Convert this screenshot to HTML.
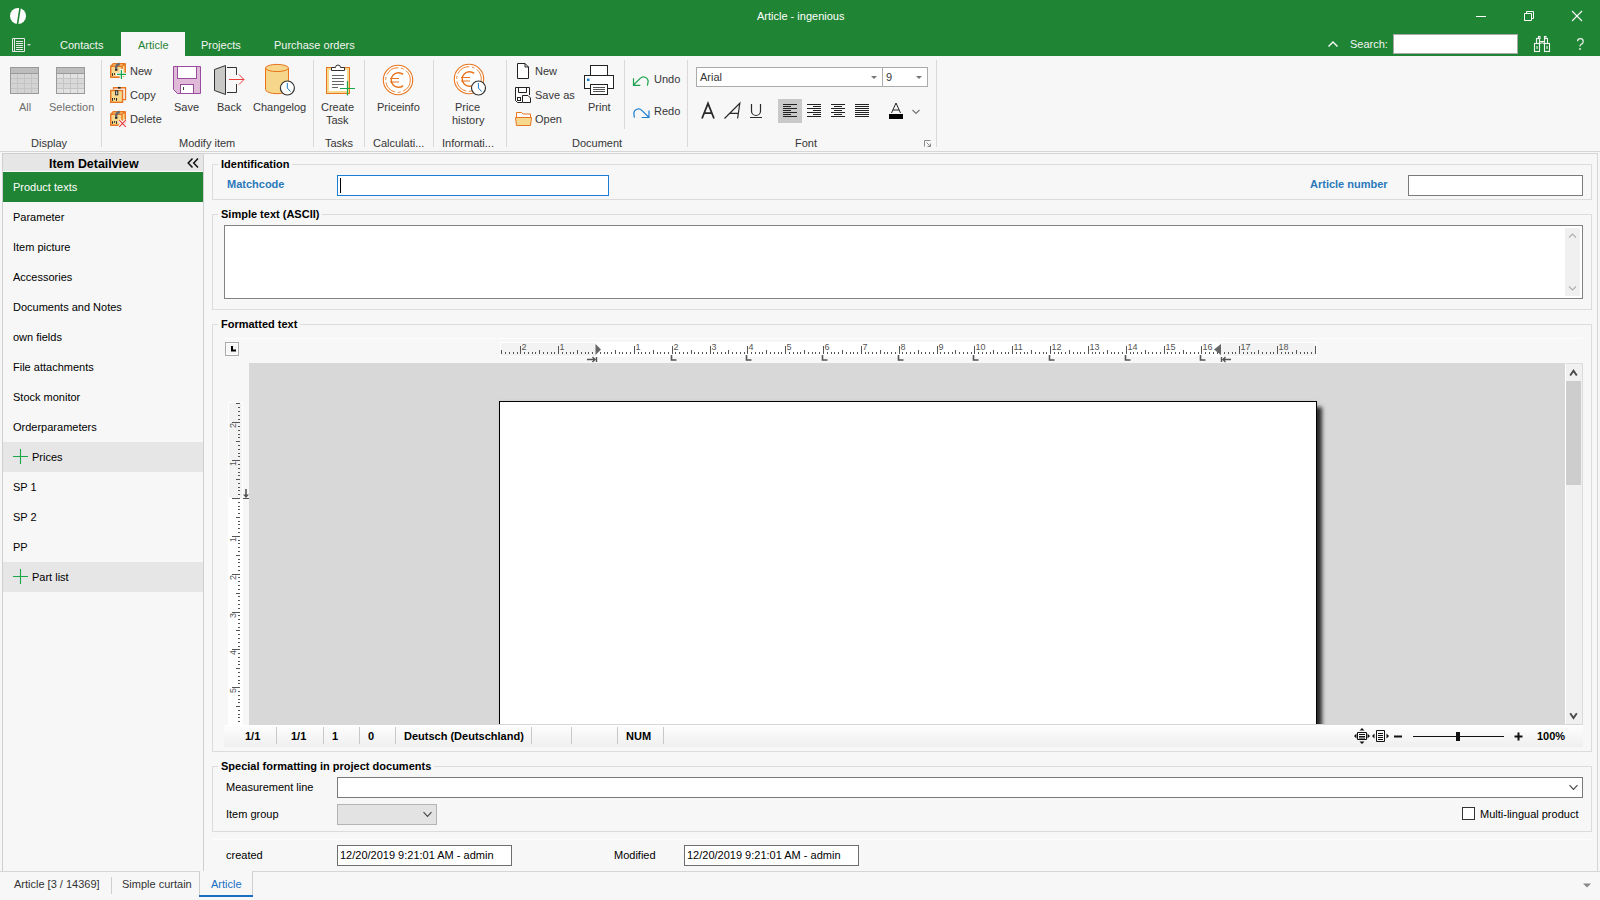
<!DOCTYPE html>
<html><head><meta charset="utf-8">
<style>
*{box-sizing:border-box}
html,body{margin:0;padding:0}
body{width:1600px;height:900px;overflow:hidden;position:relative;background:#f7f7f7;font-family:"Liberation Sans",sans-serif;font-size:11px;color:#000}
.a{position:absolute}
.t{position:absolute;white-space:nowrap;line-height:13px}
.b{font-weight:bold}
.rl{color:#363636;font-size:11px}
.gb{position:absolute;border:1px solid #dcdcdc}
.gt{position:absolute;white-space:nowrap;line-height:13px;font-weight:bold;font-size:11px;background:#f7f7f7;padding:0 3px}
.inp{position:absolute;background:#fff;border:1px solid #7a7a7a}
.sep{position:absolute;width:1px;background:#dadada}
</style></head><body>

<!-- title bar -->
<div class="a" style="left:0;top:0;width:1600px;height:56px;background:#1f8433"></div>
<svg class="a" style="left:10px;top:8px" width="16" height="16" viewBox="0 0 16 16"><circle cx="8" cy="8" r="8" fill="#fff"/><path d="M10.2 -1 L7.4 17" stroke="#1f8433" stroke-width="1.6"/></svg>
<div class="t" style="left:757px;top:10px;color:#fff;font-size:11px">Article - ingenious</div>
<svg class="a" style="left:1470px;top:5px" width="120" height="22" viewBox="0 0 120 22">
 <path d="M6 11.5h10" stroke="#fff" stroke-width="1"/>
 <path d="M54.5 8.5h7v7h-7z M56.5 8.5v-2h7v7h-2" stroke="#fff" stroke-width="1" fill="none"/>
 <path d="M102 6l10 10M112 6l-10 10" stroke="#fff" stroke-width="1.1"/>
</svg>
<!-- tab row -->
<svg class="a" style="left:12px;top:38px" width="20" height="14" viewBox="0 0 20 14">
 <path d="M0.5 0.5h12v13h-12z" stroke="#e8e8e8" fill="none"/>
 <path d="M2.5 0.5v13" stroke="#e8e8e8"/>
 <path d="M4 3.5h7M4 5.5h7M4 7.5h7M4 9.5h7M4 11.5h7" stroke="#e8e8e8"/>
 <path d="M15 6h4l-2 2z" fill="#d0d0d0"/>
</svg>
<div class="t" style="left:60px;top:39px;color:#f4f4f4">Contacts</div>
<div class="a" style="left:121px;top:32px;width:64px;height:24px;background:#f7f7f7"></div>
<div class="t" style="left:138px;top:39px;color:#1f8433">Article</div>
<div class="t" style="left:201px;top:39px;color:#f4f4f4">Projects</div>
<div class="t" style="left:274px;top:39px;color:#f4f4f4">Purchase orders</div>
<svg class="a" style="left:1327px;top:40px" width="12" height="8" viewBox="0 0 12 8"><path d="M1.5 6.5l4.5-4.5l4.5 4.5" stroke="#fff" stroke-width="1.4" fill="none"/></svg>
<div class="t" style="left:1350px;top:38px;color:#f4f4f4">Search:</div>
<div class="a" style="left:1393px;top:34px;width:125px;height:20px;background:#fff;border:1px solid #a8a8a8"></div>
<svg class="a" style="left:1528px;top:32px" width="64" height="24" viewBox="1528 32 64 24">
 <g fill="none" stroke="#f2f2f2" stroke-width="1.1">
  <rect x="1534.5" y="43.5" width="5" height="8"/>
  <rect x="1544.5" y="43.5" width="5" height="8"/>
  <rect x="1536.5" y="38.5" width="3" height="5"/>
  <rect x="1544.5" y="38.5" width="3" height="5"/>
  <rect x="1538.5" y="36.5" width="1.5" height="2"/>
  <rect x="1544.5" y="36.5" width="1.5" height="2"/>
  <path d="M1540 41.5h4M1540 43.5q2-1.5 4 0"/>
  <path d="M1537 46v3M1547 46v3"/>
 </g>
 <path d="M1577.6 41.2Q1577.6 38.6 1580.4 38.6Q1583.2 38.6 1583.2 41.4Q1583.2 43.4 1581.2 44.3Q1580 44.9 1580 46.6" fill="none" stroke="#f2f2f2" stroke-width="1.2"/>
 <circle cx="1580" cy="49" r="0.9" fill="#f2f2f2"/>
</svg>

<!-- ribbon -->
<div class="a" style="left:0;top:56px;width:1600px;height:95px;background:#f7f7f7"></div>
<div class="a" style="left:0;top:151px;width:1600px;height:1px;background:#d6d6d6"></div>
<svg class="a" style="left:0;top:0" width="1600" height="152" viewBox="0 0 1600 152">
 <!-- separators -->
 <g fill="#d9d9d9">
  <rect x="101" y="60" width="1" height="87"/><rect x="313" y="60" width="1" height="87"/>
  <rect x="364" y="60" width="1" height="87"/><rect x="433" y="60" width="1" height="87"/>
  <rect x="506" y="60" width="1" height="87"/><rect x="687" y="60" width="1" height="87"/>
  <rect x="936" y="60" width="1" height="87"/><rect x="624" y="60" width="1" height="69"/>
 </g>
 <!-- All table -->
 <g>
  <rect x="10.5" y="67.5" width="28" height="26" fill="#d3d3d3" stroke="#9a9a9a"/>
  <rect x="11" y="68" width="27" height="5" fill="#bdbdbd"/>
  <path d="M11 73.5h27M11 78.5h27M11 83.5h27M11 88.5h27M17.5 73v20M24.5 73v20M31.5 73v20" stroke="#c4c4c4" fill="none"/>
  <path d="M10.5 73.5h28" stroke="#9a9a9a"/>
 </g>
 <g>
  <rect x="56.5" y="67.5" width="28" height="26" fill="#d9d9d9" stroke="#9a9a9a"/>
  <rect x="57" y="68" width="27" height="5" fill="#bdbdbd"/>
  <rect x="57" y="74" width="27" height="4" fill="#e2e2e2"/>
  <rect x="57" y="89" width="27" height="4" fill="#e2e2e2"/>
  <path d="M57 78.5h27M57 83.5h27M57 88.5h27M63.5 73v20M70.5 73v20M77.5 73v20" stroke="#c4c4c4" fill="none"/>
  <path d="M56.5 73.5h28" stroke="#9a9a9a"/>
 </g>
 <!-- New box -->
 <g transform="translate(110,63)">
  <path d="M0.75 3.25L3.25 0.75H15.25V11.25L12 14.25H0.75Z" fill="#f6d98f"/>
  <path d="M0.75 3.25H12V14.25H0.75ZM0.75 3.25L3.25 0.75H15.25L12 3.25M15.25 0.75V11.25L12 14.25" fill="none" stroke="#e8751f" stroke-width="1.4" stroke-linejoin="round"/>
  <path d="M9.8 1Q6.2 1.5 6.2 4.5V6.5" fill="none" stroke="#6a6a6a" stroke-width="2.4"/>
  <path d="M6.2 6V7.8" stroke="#2a2a2a" stroke-width="2.4"/>
  <path d="M2.5 10.2v2.6M4.5 10.2v1.6" stroke="#222"/>
  <path d="M11.4 6V17M6 11.4H17" stroke="#f7f7f7" stroke-width="3.4"/>
  <path d="M11.4 7V16M7 11.4H16" stroke="#18a84a" stroke-width="1.2"/>
 </g>
 <!-- Copy box -->
 <g transform="translate(110,87)">
  <path d="M3.5 2.5V0.75H15.5V12.6H13" fill="none" stroke="#e8751f" stroke-width="1.3"/>
  <path d="M8 0.75h2.6" stroke="#2a2a2a" stroke-width="1.6"/>
  <rect x="0.75" y="3.5" width="11.8" height="11.8" fill="#f6d98f" stroke="#e8751f" stroke-width="1.4"/>
  <rect x="5.6" y="3.8" width="2.2" height="4" fill="#ddd" stroke="#2a2a2a" stroke-width="1"/>
  <path d="M2.5 11v2.8M4.5 11v1.6M6.5 11v2.8" stroke="#222"/>
 </g>
 <!-- Delete box -->
 <g transform="translate(110,111)">
  <path d="M0.75 3.25L3.25 0.75H15.25V11.25L12 14.25H0.75Z" fill="#f6d98f"/>
  <path d="M0.75 3.25H12V14.25H0.75ZM0.75 3.25L3.25 0.75H15.25L12 3.25M15.25 0.75V11.25L12 14.25" fill="none" stroke="#e8751f" stroke-width="1.4" stroke-linejoin="round"/>
  <path d="M9.8 1Q6.2 1.5 6.2 4.5V6.5" fill="none" stroke="#6a6a6a" stroke-width="2.4"/>
  <path d="M6.2 6V7.8" stroke="#2a2a2a" stroke-width="2.4"/>
  <path d="M2.5 10.2v2.6M4.5 10.2v1.6M6.5 10.2v2.6" stroke="#222"/>
  <path d="M9.2 9.2l6.6 6.6M15.8 9.2l-6.6 6.6" stroke="#f7f7f7" stroke-width="3.2"/>
  <path d="M9.2 9.2l6.6 6.6M15.8 9.2l-6.6 6.6" stroke="#ea3a3a" stroke-width="1.1"/>
 </g>
 <!-- Save floppy -->
 <g>
  <path d="M173.5 66.5H200.5V93.5H177.5L173.5 89.5Z" fill="#dfbbd8" stroke="#9a4d9f"/>
  <rect x="177.5" y="66.5" width="19" height="12" fill="#fff" stroke="#9a4d9f"/>
  <rect x="180.5" y="84.5" width="13" height="9" fill="#fff" stroke="#9a4d9f"/>
  <path d="M183.5 87v3" stroke="#444"/>
 </g>
 <!-- Back -->
 <g>
  <path d="M214.5 69.5L225.5 65.5V94.5L214.5 90.5Z" fill="#c8c8c6" stroke="#333"/>
  <path d="M227 67.5h9.5v7.5M236.5 84v8.5H227" stroke="#333" fill="none"/>
  <path d="M229 79.5h15M239 74.5l5 5l-5 5" stroke="#ee3d3d" fill="none"/>
 </g>
 <!-- Changelog -->
 <g>
  <path d="M265.5 68V89.5A11.5 4.2 0 0 0 288.5 89.5V68" fill="#f5d68b" stroke="#e8751f"/>
  <ellipse cx="277" cy="68" rx="11.5" ry="3.6" fill="#f5d68b" stroke="#e8751f"/>
  <circle cx="287.4" cy="88" r="7" fill="#fff" stroke="#333" stroke-width="1.2"/>
  <path d="M287.3 83v5l3.2 3.6" stroke="#1b7fd0" fill="none"/>
 </g>
 <!-- Create task -->
 <g>
  <rect x="326.5" y="67.5" width="23" height="26" fill="#f6d98f" stroke="#e8751f"/>
  <rect x="329" y="70" width="18" height="21" fill="#fff"/>
  <path d="M331.5 70.5V67.5H335.5A2.5 2.5 0 0 1 340.5 67.5H344.5V70.5Z" fill="#fff" stroke="#333"/>
  <path d="M332 75.5h12M332 78.5h12M332 81.5h12M332 84.5h12M332 87.5h6" stroke="#666"/>
  <path d="M347.5 81v14.5M340 88.5h15" stroke="#18a84a" stroke-width="1.2"/>
 </g>
 <!-- Priceinfo coin -->
 <g>
  <circle cx="398" cy="80" r="14.7" fill="#fff" stroke="#e8751f" stroke-width="1.1"/>
  <circle cx="398" cy="80" r="12.3" fill="none" stroke="#e8751f" stroke-width="0.9" stroke-dasharray="14 2.5 3 2.5"/>
  <path d="M403.2 74.4A7.3 7.3 0 1 0 403.2 85.6" fill="none" stroke="#e8751f" stroke-width="1.4"/>
  <path d="M390 78.5h9M390 82h9" stroke="#e8751f" stroke-width="1.2"/>
 </g>
 <!-- Price history -->
 <g>
  <circle cx="469" cy="79" r="14.7" fill="#fff" stroke="#e8751f" stroke-width="1.1"/>
  <circle cx="469" cy="79" r="12.3" fill="none" stroke="#e8751f" stroke-width="0.9" stroke-dasharray="14 2.5 3 2.5"/>
  <path d="M474.2 73.4A7.3 7.3 0 1 0 474.2 84.6" fill="none" stroke="#e8751f" stroke-width="1.4"/>
  <path d="M461 77.5h9M461 81h9" stroke="#e8751f" stroke-width="1.2"/>
  <circle cx="478.5" cy="88" r="7" fill="#fff" stroke="#333" stroke-width="1.2"/>
  <path d="M478.4 83v5l3.2 3.6" stroke="#1b7fd0" fill="none"/>
 </g>
 <!-- doc new -->
 <g>
  <path d="M517.5 63.5H525L528.5 67V78.5H517.5Z" fill="#fff" stroke="#222"/>
  <path d="M525 63.5V67H528.5" fill="none" stroke="#222"/>
 </g>
 <!-- save as -->
 <g>
  <path d="M515.5 87.5H529.5V95M522 102.5H517.5L515.5 100.5V87.5" fill="#fff" stroke="#222"/>
  <path d="M518.5 87.5V92.5H526.5V87.5" fill="none" stroke="#222"/>
  <rect x="517.5" y="97.5" width="3" height="3" fill="none" stroke="#222"/>
  <path d="M522.5 95.5H528L530.5 98V102.5H522.5Z" fill="#fff" stroke="#222"/>
 </g>
 <!-- open folder -->
 <g>
  <path d="M516.5 112.5H521.5L523 114H530.5V118H516.5Z" fill="#fff" stroke="#e8751f"/>
  <path d="M515.5 117.5H531.5L530.5 125.5H516.5Z" fill="#f6d98f" stroke="#e8751f"/>
 </g>
 <!-- print -->
 <g>
  <rect x="590.5" y="65.5" width="17" height="10" fill="#fff" stroke="#222"/>
  <rect x="584.5" y="75.5" width="29" height="13" fill="#fff" stroke="#222"/>
  <rect x="590.5" y="84.5" width="17" height="10" fill="#fff" stroke="#222"/>
  <rect x="587" y="78.5" width="2.5" height="2.5" fill="#1b7fd0"/>
  <path d="M593 87.5h12M593 89.5h12M593 91.5h12" stroke="#555"/>
 </g>
 <!-- undo redo -->
 <path d="M633.5 85L640.2 78.3A4.7 4.7 0 0 1 648.2 81.2L647.4 85.6M633.5 78.3V85.3H640.3" fill="none" stroke="#1aa34a" stroke-width="1.2"/>
 <path d="M634.4 117.6L633.8 113.2A4.7 4.7 0 0 1 641.8 110.3L648.8 117.2M649 110.5V117.5H641.6" fill="none" stroke="#1b7fd0" stroke-width="1.2"/>
 <!-- font combos -->
 <rect x="696.5" y="67.5" width="186" height="19" fill="#fff" stroke="#ababab"/>
 <rect x="882.5" y="67.5" width="45" height="19" fill="#fff" stroke="#ababab"/>
 <path d="M871 76h6l-3 3z" fill="#777"/>
 <path d="M916 76h6l-3 3z" fill="#777"/>
 <!-- align -->
 <rect x="778" y="99" width="24" height="24" fill="#c9c9c9"/>
 <g stroke="#222" stroke-width="1">
  <path d="M783 104.5h14M783 106.5h8M783 108.5h14M783 110.5h8M783 112.5h14M783 114.5h8M783 116.5h14"/>
  <path d="M807 104.5h14M813 106.5h8M807 108.5h14M813 110.5h8M807 112.5h14M813 114.5h8M807 116.5h14"/>
  <path d="M831 104.5h14M834 106.5h8M831 108.5h14M834 110.5h8M831 112.5h14M834 114.5h8M831 116.5h14"/>
  <path d="M855 104.5h14M855 106.5h14M855 108.5h14M855 110.5h14M855 112.5h14M855 114.5h14M855 116.5h14"/>
 </g>
 <!-- B I U -->
 <path d="M702 118.5L708 103.5L714 118.5M704.6 113.2h6.8" fill="none" stroke="#2a2a2a" stroke-width="1.8"/>
 <path d="M724.5 118.5L739.8 103.3L737.6 118.5M730 113.3h8.2" fill="none" stroke="#2a2a2a" stroke-width="1.2"/>
 <path d="M751.5 104v7a4.5 4.5 0 0 0 9 0V104M750 117.5h12" fill="none" stroke="#2a2a2a" stroke-width="1.2"/>
 <!-- font color -->
 <path d="M891.5 113L896 103L900.5 113M893 110h6" fill="none" stroke="#222" stroke-width="1"/>
 <rect x="889" y="114" width="14" height="5" fill="#000"/>
 <path d="M912.5 110l3.5 3.5l3.5-3.5" fill="none" stroke="#777" stroke-width="1.2"/>
 <!-- dialog launcher -->
 <path d="M924.5 146.5V140.5H930.5" fill="none" stroke="#8a8a8a"/>
 <path d="M926.5 142.5l4 4M927.5 146.5h3v-3" fill="none" stroke="#8a8a8a"/>
</svg>
<!-- ribbon labels -->
<div class="t rl" style="left:19px;top:101px;color:#6e6e6e">All</div>
<div class="t rl" style="left:49px;top:101px;color:#6e6e6e">Selection</div>
<div class="t rl" style="left:31px;top:137px">Display</div>
<div class="t rl" style="left:130px;top:65px">New</div>
<div class="t rl" style="left:130px;top:89px">Copy</div>
<div class="t rl" style="left:130px;top:113px">Delete</div>
<div class="t rl" style="left:174px;top:101px">Save</div>
<div class="t rl" style="left:217px;top:101px">Back</div>
<div class="t rl" style="left:253px;top:101px">Changelog</div>
<div class="t rl" style="left:179px;top:137px">Modify item</div>
<div class="t rl" style="left:321px;top:101px">Create</div>
<div class="t rl" style="left:326px;top:114px">Task</div>
<div class="t rl" style="left:325px;top:137px">Tasks</div>
<div class="t rl" style="left:377px;top:101px">Priceinfo</div>
<div class="t rl" style="left:373px;top:137px">Calculati...</div>
<div class="t rl" style="left:455px;top:101px">Price</div>
<div class="t rl" style="left:452px;top:114px">history</div>
<div class="t rl" style="left:442px;top:137px">Informati...</div>
<div class="t rl" style="left:535px;top:65px">New</div>
<div class="t rl" style="left:535px;top:89px">Save as</div>
<div class="t rl" style="left:535px;top:113px">Open</div>
<div class="t rl" style="left:588px;top:101px">Print</div>
<div class="t rl" style="left:654px;top:73px">Undo</div>
<div class="t rl" style="left:654px;top:105px">Redo</div>
<div class="t rl" style="left:572px;top:137px">Document</div>
<div class="t rl" style="left:700px;top:71px">Arial</div>
<div class="t rl" style="left:886px;top:71px">9</div>
<div class="t rl" style="left:795px;top:137px">Font</div>

<!-- sidebar -->
<div class="a" style="left:2px;top:153px;width:202px;height:718px;border:1px solid #cfcfcf;border-bottom:none;background:#f7f7f7"></div>
<div class="a" style="left:3px;top:154px;width:200px;height:17px;background:#e6e6e6"></div>
<div class="a" style="left:3px;top:172px;width:200px;height:30px;background:#1f8433"></div>
<div class="t b" style="left:49px;top:158px;font-size:12.4px">Item Detailview</div>
<svg class="a" style="left:186px;top:157px" width="14" height="12" viewBox="0 0 14 12"><path d="M6.5 1.5L2.2 6l4.3 4.5M12 1.5L7.7 6l4.3 4.5" fill="none" stroke="#111" stroke-width="1.5"/></svg>
<div class="a" style="left:3px;top:442px;width:200px;height:30px;background:#e6e6e6"></div>
<div class="a" style="left:3px;top:562px;width:200px;height:30px;background:#e6e6e6"></div>
<div class="t" style="left:13px;top:181px;color:#fff">Product texts</div>
<div class="t" style="left:13px;top:211px">Parameter</div>
<div class="t" style="left:13px;top:241px">Item picture</div>
<div class="t" style="left:13px;top:271px">Accessories</div>
<div class="t" style="left:13px;top:301px">Documents and Notes</div>
<div class="t" style="left:13px;top:331px">own fields</div>
<div class="t" style="left:13px;top:361px">File attachments</div>
<div class="t" style="left:13px;top:391px">Stock monitor</div>
<div class="t" style="left:13px;top:421px">Orderparameters</div>
<div class="t" style="left:32px;top:451px">Prices</div>
<div class="t" style="left:13px;top:481px">SP 1</div>
<div class="t" style="left:13px;top:511px">SP 2</div>
<div class="t" style="left:13px;top:541px">PP</div>
<div class="t" style="left:32px;top:571px">Part list</div>
<svg class="a" style="left:13px;top:449px" width="16" height="16" viewBox="0 0 16 16"><path d="M7.5 0v15M0 7.5h15" stroke="#18a84a" stroke-width="1.1"/></svg>
<svg class="a" style="left:13px;top:569px" width="16" height="16" viewBox="0 0 16 16"><path d="M7.5 0v15M0 7.5h15" stroke="#18a84a" stroke-width="1.1"/></svg>

<!-- main panel -->
<div class="a" style="left:203px;top:153px;width:1395px;height:718px;border-top:1px solid #d6d6d6;border-right:1px solid #d6d6d6"></div>

<!-- groups -->
<div class="gb" style="left:212px;top:164px;width:1380px;height:36px"></div>
<div class="gt" style="left:218px;top:158px">Identification</div>
<div class="t b" style="left:227px;top:178px;color:#2b79bb">Matchcode</div>
<div class="inp" style="left:337px;top:175px;width:272px;height:21px;border-color:#1a7fd4"></div>
<div class="a" style="left:340px;top:178px;width:1px;height:15px;background:#000"></div>
<div class="t b" style="left:1310px;top:178px;color:#2b79bb">Article number</div>
<div class="inp" style="left:1408px;top:175px;width:175px;height:21px"></div>

<div class="gb" style="left:212px;top:214px;width:1380px;height:96px"></div>
<div class="gt" style="left:218px;top:208px">Simple text (ASCII)</div>
<div class="inp" style="left:224px;top:225px;width:1359px;height:74px;border-color:#828282"></div>
<div class="a" style="left:1565px;top:228px;width:15px;height:68px;background:#f0f0f0"></div>
<svg class="a" style="left:1565px;top:228px" width="15" height="68" viewBox="0 0 15 68"><path d="M4 9.5l3.5-3.5l3.5 3.5M4 58.5l3.5 3.5l3.5-3.5" fill="none" stroke="#b0b0b0" stroke-width="1.2"/></svg>

<div class="gb" style="left:212px;top:324px;width:1380px;height:428px"></div>
<div class="gt" style="left:218px;top:318px">Formatted text</div>

<!-- rich edit -->
<div class="a" style="left:249px;top:363px;width:1316px;height:362px;background:#d8d8d8;overflow:hidden">
 <div class="a" style="left:250px;top:38px;width:818px;height:323px;background:#fff;border:1px solid #000;border-bottom:none;box-shadow:5px 6px 4px rgba(0,0,0,0.8),0 0 3px rgba(0,0,0,0.08)"></div>
</div>
<div class="a" style="left:1565px;top:363px;width:18px;height:362px;background:#f0f0f0;border-left:1px solid #fff;border-top:1px solid #dcdcdc;border-right:1px solid #dcdcdc"></div>
<div class="a" style="left:1566px;top:381px;width:15px;height:104px;background:#cdcdcd"></div>
<svg class="a" style="left:1565px;top:363px" width="18" height="362" viewBox="0 0 18 362"><path d="M5.2 12.5L8.5 7.6L11.8 12.5M5.2 350.2L8.5 355.1L11.8 350.2" fill="none" stroke="#4a4a4a" stroke-width="1.9"/></svg>
<svg class="a" style="left:224px;top:338px" width="1360" height="26" viewBox="224 338 1360 26">
<rect x="224" y="338" width="1359" height="1" fill="#fdfdfd"/>
<rect x="225.5" y="342.5" width="13" height="13" fill="#fff" stroke="#a9a9a9"/>
<rect x="227" y="344" width="10" height="10" fill="#f6f6f6"/>
<path d="M232 346v4.5h4" stroke="#000" stroke-width="2" fill="none"/>
<rect x="500" y="342" width="817" height="15" fill="#fff"/>
<rect x="501" y="343" width="95" height="13" fill="#f3f3f3"/>
<rect x="1219" y="343" width="97" height="13" fill="#f3f3f3"/>
<path d="M501.5 350v4M505.5 352v2M509.5 352v2M513.5 352v2M517.5 352v2M520.5 346v8M524.5 352v2M528.5 352v2M532.5 352v2M535.5 352v2M539.5 350v4M543.5 352v2M547.5 352v2M551.5 352v2M554.5 352v2M558.5 346v8M562.5 352v2M566.5 352v2M570.5 352v2M573.5 352v2M577.5 350v4M581.5 352v2M585.5 352v2M588.5 352v2M592.5 352v2M600.5 352v2M604.5 352v2M607.5 352v2M611.5 352v2M615.5 350v4M619.5 352v2M622.5 352v2M626.5 352v2M630.5 352v2M634.5 346v8M638.5 352v2M641.5 352v2M645.5 352v2M649.5 352v2M653.5 350v4M657.5 352v2M660.5 352v2M664.5 352v2M668.5 352v2M672.5 346v8M675.5 352v2M679.5 352v2M683.5 352v2M687.5 352v2M691.5 350v4M694.5 352v2M698.5 352v2M702.5 352v2M706.5 352v2M710.5 346v8M713.5 352v2M717.5 352v2M721.5 352v2M725.5 352v2M728.5 350v4M732.5 352v2M736.5 352v2M740.5 352v2M744.5 352v2M747.5 346v8M751.5 352v2M755.5 352v2M759.5 352v2M762.5 352v2M766.5 350v4M770.5 352v2M774.5 352v2M778.5 352v2M781.5 352v2M785.5 346v8M789.5 352v2M793.5 352v2M797.5 352v2M800.5 352v2M804.5 350v4M808.5 352v2M812.5 352v2M815.5 352v2M819.5 352v2M823.5 346v8M827.5 352v2M831.5 352v2M834.5 352v2M838.5 352v2M842.5 350v4M846.5 352v2M850.5 352v2M853.5 352v2M857.5 352v2M861.5 346v8M865.5 352v2M868.5 352v2M872.5 352v2M876.5 352v2M880.5 350v4M884.5 352v2M887.5 352v2M891.5 352v2M895.5 352v2M899.5 346v8M902.5 352v2M906.5 352v2M910.5 352v2M914.5 352v2M918.5 350v4M921.5 352v2M925.5 352v2M929.5 352v2M933.5 352v2M937.5 346v8M940.5 352v2M944.5 352v2M948.5 352v2M952.5 352v2M955.5 350v4M959.5 352v2M963.5 352v2M967.5 352v2M971.5 352v2M974.5 346v8M978.5 352v2M982.5 352v2M986.5 352v2M990.5 352v2M993.5 350v4M997.5 352v2M1001.5 352v2M1005.5 352v2M1008.5 352v2M1012.5 346v8M1016.5 352v2M1020.5 352v2M1024.5 352v2M1027.5 352v2M1031.5 350v4M1035.5 352v2M1039.5 352v2M1043.5 352v2M1046.5 352v2M1050.5 346v8M1054.5 352v2M1058.5 352v2M1061.5 352v2M1065.5 352v2M1069.5 350v4M1073.5 352v2M1077.5 352v2M1080.5 352v2M1084.5 352v2M1088.5 346v8M1092.5 352v2M1095.5 352v2M1099.5 352v2M1103.5 352v2M1107.5 350v4M1111.5 352v2M1114.5 352v2M1118.5 352v2M1122.5 352v2M1126.5 346v8M1130.5 352v2M1133.5 352v2M1137.5 352v2M1141.5 352v2M1145.5 350v4M1148.5 352v2M1152.5 352v2M1156.5 352v2M1160.5 352v2M1164.5 346v8M1167.5 352v2M1171.5 352v2M1175.5 352v2M1179.5 352v2M1183.5 350v4M1186.5 352v2M1190.5 352v2M1194.5 352v2M1198.5 352v2M1201.5 346v8M1205.5 352v2M1209.5 352v2M1213.5 352v2M1217.5 352v2M1220.5 350v4M1224.5 352v2M1228.5 352v2M1232.5 352v2M1235.5 352v2M1239.5 346v8M1243.5 352v2M1247.5 352v2M1251.5 352v2M1254.5 352v2M1258.5 350v4M1262.5 352v2M1266.5 352v2M1270.5 352v2M1273.5 352v2M1277.5 346v8M1281.5 352v2M1285.5 352v2M1288.5 352v2M1292.5 352v2M1296.5 350v4M1300.5 352v2M1304.5 352v2M1307.5 352v2M1311.5 352v2M1315.5 346v8" stroke="#555" stroke-width="1"/>
<text x="521.5" y="350" font-family="Liberation Sans" font-size="9" fill="#555">2</text>
<text x="559.5" y="350" font-family="Liberation Sans" font-size="9" fill="#555">1</text>
<text x="635.5" y="350" font-family="Liberation Sans" font-size="9" fill="#555">1</text>
<text x="673.5" y="350" font-family="Liberation Sans" font-size="9" fill="#555">2</text>
<text x="711.5" y="350" font-family="Liberation Sans" font-size="9" fill="#555">3</text>
<text x="748.5" y="350" font-family="Liberation Sans" font-size="9" fill="#555">4</text>
<text x="786.5" y="350" font-family="Liberation Sans" font-size="9" fill="#555">5</text>
<text x="824.5" y="350" font-family="Liberation Sans" font-size="9" fill="#555">6</text>
<text x="862.5" y="350" font-family="Liberation Sans" font-size="9" fill="#555">7</text>
<text x="900.5" y="350" font-family="Liberation Sans" font-size="9" fill="#555">8</text>
<text x="938.5" y="350" font-family="Liberation Sans" font-size="9" fill="#555">9</text>
<text x="975.5" y="350" font-family="Liberation Sans" font-size="9" fill="#555">10</text>
<text x="1013.5" y="350" font-family="Liberation Sans" font-size="9" fill="#555">11</text>
<text x="1051.5" y="350" font-family="Liberation Sans" font-size="9" fill="#555">12</text>
<text x="1089.5" y="350" font-family="Liberation Sans" font-size="9" fill="#555">13</text>
<text x="1127.5" y="350" font-family="Liberation Sans" font-size="9" fill="#555">14</text>
<text x="1165.5" y="350" font-family="Liberation Sans" font-size="9" fill="#555">15</text>
<text x="1202.5" y="350" font-family="Liberation Sans" font-size="9" fill="#555">16</text>
<text x="1240.5" y="350" font-family="Liberation Sans" font-size="9" fill="#555">17</text>
<text x="1278.5" y="350" font-family="Liberation Sans" font-size="9" fill="#555">18</text>
<path d="M595.5 344L601 349.5L595.5 355Z" fill="#666"/>
<path d="M587 359.5h8M592.5 357l2.5 2.5l-2.5 2.5M596.5 357v5" stroke="#555" stroke-width="1.4" fill="none"/>
<path d="M1221 344L1214 349.5L1221 355Z" fill="#666"/>
<path d="M1231 359.5h-8M1225.5 357l-2.5 2.5l2.5 2.5M1221.5 357v5" stroke="#555" stroke-width="1.4" fill="none"/>
<path d="M671.5 355v5h5" stroke="#555" stroke-width="1.6" fill="none"/>
<path d="M746.5 355v5h5" stroke="#555" stroke-width="1.6" fill="none"/>
<path d="M822.5 355v5h5" stroke="#555" stroke-width="1.6" fill="none"/>
<path d="M898.5 355v5h5" stroke="#555" stroke-width="1.6" fill="none"/>
<path d="M973.5 355v5h5" stroke="#555" stroke-width="1.6" fill="none"/>
<path d="M1049.5 355v5h5" stroke="#555" stroke-width="1.6" fill="none"/>
<path d="M1125.5 355v5h5" stroke="#555" stroke-width="1.6" fill="none"/>
<path d="M1200.5 355v5h5" stroke="#555" stroke-width="1.6" fill="none"/>
</svg>
<svg class="a" style="left:224px;top:363px" width="25" height="362" viewBox="224 363 25 362">
<rect x="228" y="402" width="15" height="323" fill="#fff"/>
<rect x="229" y="403" width="13" height="95" fill="#f3f3f3"/>
<path d="M236 403.5h4M238 407.5h2M238 411.5h2M238 415.5h2M238 419.5h2M232 422.5h8M238 426.5h2M238 430.5h2M238 434.5h2M238 437.5h2M236 441.5h4M238 445.5h2M238 449.5h2M238 453.5h2M238 456.5h2M232 460.5h8M238 464.5h2M238 468.5h2M238 472.5h2M238 475.5h2M236 479.5h4M238 483.5h2M238 487.5h2M238 490.5h2M238 494.5h2M232 498.5h8M238 502.5h2M238 506.5h2M238 509.5h2M238 513.5h2M236 517.5h4M238 521.5h2M238 524.5h2M238 528.5h2M238 532.5h2M232 536.5h8M238 540.5h2M238 543.5h2M238 547.5h2M238 551.5h2M236 555.5h4M238 559.5h2M238 562.5h2M238 566.5h2M238 570.5h2M232 574.5h8M238 577.5h2M238 581.5h2M238 585.5h2M238 589.5h2M236 593.5h4M238 596.5h2M238 600.5h2M238 604.5h2M238 608.5h2M232 612.5h8M238 615.5h2M238 619.5h2M238 623.5h2M238 627.5h2M236 630.5h4M238 634.5h2M238 638.5h2M238 642.5h2M238 646.5h2M232 649.5h8M238 653.5h2M238 657.5h2M238 661.5h2M238 664.5h2M236 668.5h4M238 672.5h2M238 676.5h2M238 680.5h2M238 683.5h2M232 687.5h8M238 691.5h2M238 695.5h2M238 699.5h2M238 702.5h2M236 706.5h4M238 710.5h2M238 714.5h2M238 717.5h2M238 721.5h2" stroke="#555" stroke-width="1"/>
<text x="0" y="0" transform="translate(236,428) rotate(-90)" font-family="Liberation Sans" font-size="9" fill="#555">2</text>
<text x="0" y="0" transform="translate(236,466) rotate(-90)" font-family="Liberation Sans" font-size="9" fill="#555">1</text>
<text x="0" y="0" transform="translate(236,542) rotate(-90)" font-family="Liberation Sans" font-size="9" fill="#555">1</text>
<text x="0" y="0" transform="translate(236,580) rotate(-90)" font-family="Liberation Sans" font-size="9" fill="#555">2</text>
<text x="0" y="0" transform="translate(236,618) rotate(-90)" font-family="Liberation Sans" font-size="9" fill="#555">3</text>
<text x="0" y="0" transform="translate(236,655) rotate(-90)" font-family="Liberation Sans" font-size="9" fill="#555">4</text>
<text x="0" y="0" transform="translate(236,693) rotate(-90)" font-family="Liberation Sans" font-size="9" fill="#555">5</text>
<path d="M246 489v8" stroke="#555" stroke-width="1.6"/><path d="M243 494.5h6l-3 3.5z" fill="#555"/><path d="M243 498.5h6" stroke="#555" stroke-width="1"/>
</svg>


<div class="a" style="left:249px;top:724px;width:1334px;height:1px;background:#d8d8d8"></div>
<div class="a" style="left:224px;top:725px;width:1359px;height:22px;background:linear-gradient(#fefefe,#efefef)"></div>
<div class="a" style="left:276px;top:727px;width:1px;height:17px;background:#c8c8c8"></div>
<div class="a" style="left:323px;top:727px;width:1px;height:17px;background:#c8c8c8"></div>
<div class="a" style="left:359px;top:727px;width:1px;height:17px;background:#c8c8c8"></div>
<div class="a" style="left:395px;top:727px;width:1px;height:17px;background:#c8c8c8"></div>
<div class="a" style="left:531px;top:727px;width:1px;height:17px;background:#c8c8c8"></div>
<div class="a" style="left:571px;top:727px;width:1px;height:17px;background:#c8c8c8"></div>
<div class="a" style="left:617px;top:727px;width:1px;height:17px;background:#c8c8c8"></div>
<div class="a" style="left:663px;top:727px;width:1px;height:17px;background:#c8c8c8"></div>
<div class="t b" style="left:245px;top:730px">1/1</div>
<div class="t b" style="left:291px;top:730px">1/1</div>
<div class="t b" style="left:332px;top:730px">1</div>
<div class="t b" style="left:368px;top:730px">0</div>
<div class="t b" style="left:404px;top:730px">Deutsch (Deutschland)</div>
<div class="t b" style="left:626px;top:730px">NUM</div>
<div class="t b" style="left:1537px;top:730px">100%</div>
<svg class="a" style="left:1350px;top:726px" width="180" height="20" viewBox="1350 726 180 20">
 <path d="M1357.5 732.5h9v7h-9z M1359 734.5h6M1359 736.5h6M1359 738h6" stroke="#111" fill="none"/>
 <path d="M1354 736l2.5-2.5v5z M1370 736l-2.5-2.5v5z M1362 728l-2.5 2.5h5z M1362 744l-2.5-2.5h5z" fill="#111"/>
 <path d="M1376.5 730.5h8v11h-8z M1378 733.5h5M1378 735.5h5M1378 737.5h5M1378 739.5h5" stroke="#111" fill="none"/>
 <path d="M1372 736l2.5-2.5v5z M1389 736l-2.5-2.5v5z" fill="#111"/>
 <path d="M1394 736.5h8" stroke="#111" stroke-width="2"/>
 <path d="M1413 736.5h91" stroke="#111" stroke-width="1"/>
 <rect x="1456" y="732" width="4" height="9" fill="#111"/>
 <path d="M1514.5 736.5h8M1518.5 732.5v8" stroke="#111" stroke-width="2"/>
</svg>

<div class="gb" style="left:212px;top:766px;width:1380px;height:66px"></div>
<div class="gt" style="left:218px;top:760px">Special formatting in project documents</div>
<div class="t" style="left:226px;top:781px">Measurement line</div>
<div class="inp" style="left:337px;top:777px;width:1246px;height:21px"></div>
<svg class="a" style="left:1567px;top:781px" width="14" height="12" viewBox="0 0 14 12"><path d="M2.5 4.2l4 4.2l4-4.2" fill="none" stroke="#444" stroke-width="1.1"/></svg>
<div class="t" style="left:226px;top:808px">Item group</div>
<div class="a" style="left:337px;top:804px;width:100px;height:21px;background:#e3e3e3;border:1px solid #b4b4b4"></div>
<svg class="a" style="left:421px;top:808px" width="14" height="12" viewBox="0 0 14 12"><path d="M2.5 4.2l4 4.2l4-4.2" fill="none" stroke="#444" stroke-width="1.1"/></svg>
<div class="a" style="left:1462px;top:807px;width:13px;height:13px;background:#fff;border:1px solid #333"></div>
<div class="t" style="left:1480px;top:808px">Multi-lingual product</div>

<div class="a" style="left:213px;top:839px;width:1378px;height:1px;background:#fdfdfd"></div>
<div class="t" style="left:226px;top:849px">created</div>
<div class="inp" style="left:337px;top:845px;width:175px;height:21px;border-color:#6e6e6e"></div>
<div class="t" style="left:340px;top:849px">12/20/2019 9:21:01 AM - admin</div>
<div class="t" style="left:614px;top:849px">Modified</div>
<div class="inp" style="left:684px;top:845px;width:175px;height:21px;border-color:#6e6e6e"></div>
<div class="t" style="left:687px;top:849px">12/20/2019 9:21:01 AM - admin</div>

<!-- bottom tabs -->
<div class="a" style="left:0;top:871px;width:1600px;height:1px;background:#d6d6d6"></div>
<div class="t" style="left:14px;top:878px;color:#333">Article [3 / 14369]</div>
<div class="a" style="left:111px;top:877px;width:1px;height:17px;background:#d0d0d0"></div>
<div class="t" style="left:122px;top:878px;color:#333">Simple curtain</div>
<div class="a" style="left:199px;top:871px;width:54px;height:26px;background:#f7f7f7;border-left:1px solid #cfcfcf;border-right:1px solid #cfcfcf"></div>
<div class="a" style="left:199px;top:895px;width:54px;height:2px;background:#1a6fc4"></div>
<div class="t" style="left:211px;top:878px;color:#1a6fc4">Article</div>
<svg class="a" style="left:1582px;top:882px" width="10" height="6" viewBox="0 0 10 6"><path d="M1 1.5h8l-4 4z" fill="#888"/></svg>

</body></html>
